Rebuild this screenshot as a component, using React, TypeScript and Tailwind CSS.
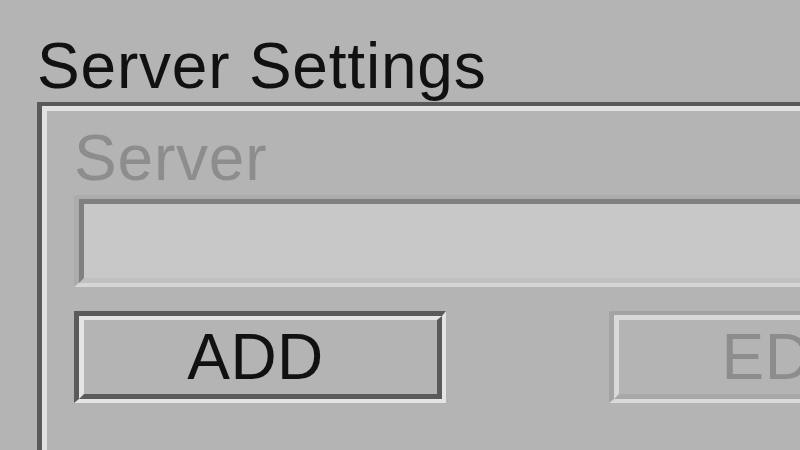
import React from "react";

export default function App() {
  const font = { fontFamily: '"Liberation Sans", Arial, sans-serif' };
  return (
    <div
      className="w-[800px] h-[450px] overflow-hidden bg-[#b4b4b4] flex flex-col"
      style={font}
    >
      <div className="pl-[37px] pt-[34px] text-[64px] leading-[64px] tracking-[0.8px] text-[#111] whitespace-nowrap">
        Server Settings
      </div>
      <div className="ml-[37px] mt-[4px] w-[1000px] h-[500px] shrink-0 border-t-[4px] border-l-[5px] border-[#5a5a5a]">
        <div className="h-full border-t-[5px] border-l-[5px] border-[#e2e2e2] pl-[27px] pt-[15px] flex flex-col">
          <div className="text-[64px] leading-[64px] tracking-[0.8px] text-[#8d8d8d] whitespace-nowrap">
            Server
          </div>
          <div className="mt-[5px] w-[900px] border-t-[4px] border-l-[5px] border-t-[#acacac] border-l-[#acacac] border-b-[4px] border-r-[4px] border-b-[#d6d6d6] border-r-[#d6d6d6]">
            <div className="h-[84px] border-t-[5px] border-l-[5px] border-t-[#808080] border-l-[#808080] border-b-[5px] border-r-[5px] border-b-[#c0c0c0] border-r-[#c0c0c0] bg-[#c8c8c8]" />
          </div>
          <div className="mt-[24px] flex gap-[163px]">
            <div className="w-[372px] h-[92px] border-t-[5px] border-l-[5px] border-t-[#5a5a5a] border-l-[#5a5a5a] border-b-[4px] border-r-[4px] border-b-[#e4e4e4] border-r-[#e4e4e4]">
              <div className="h-full border-t-[4px] border-l-[5px] border-t-[#e4e4e4] border-l-[#e4e4e4] border-b-[5px] border-r-[5px] border-b-[#5a5a5a] border-r-[#5a5a5a] flex items-center justify-center pr-[10px]">
                <span className="text-[64px] leading-[64px] tracking-[0.5px] text-[#111]">ADD</span>
              </div>
            </div>
            <div className="w-[372px] h-[92px] shrink-0 border-t-[4px] border-l-[5px] border-t-[#a3a3a3] border-l-[#a3a3a3] border-b-[4px] border-r-[4px] border-b-[#d9d9d9] border-r-[#d9d9d9]">
              <div className="h-full border-t-[5px] border-l-[5px] border-t-[#d9d9d9] border-l-[#d9d9d9] border-b-[5px] border-r-[5px] border-b-[#a8a8a8] border-r-[#a8a8a8] flex items-center justify-center">
                <span className="text-[64px] leading-[64px] tracking-[0.5px] text-[#8d8d8d]">EDIT</span>
              </div>
            </div>
          </div>
        </div>
      </div>
    </div>
  );
}
